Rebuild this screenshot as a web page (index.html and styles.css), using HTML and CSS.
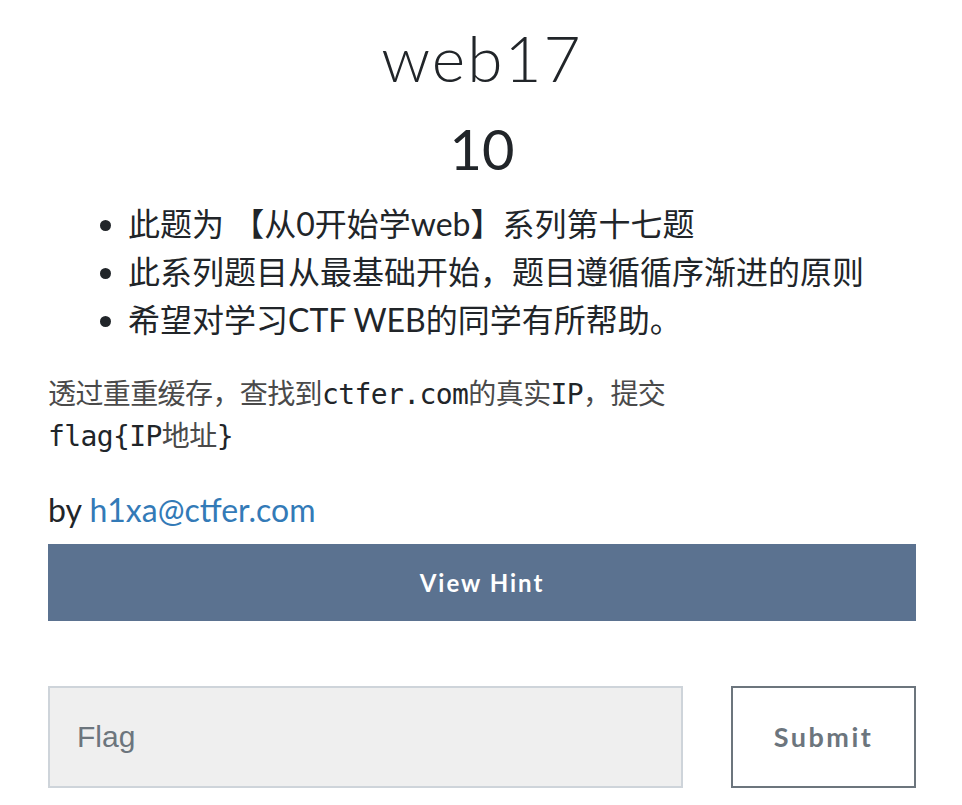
FILE: index.html
```html
<!DOCTYPE html>
<html lang="zh">
<head>
<meta charset="utf-8">
<title>web17</title>
<link rel="stylesheet" href="styles.css">
</head>
<body>
<div class="challenge">
  <h2 class="challenge-name">web17</h2>
  <h3 class="challenge-value">10</h3>
  <ul class="challenge-points">
    <li>此题为 【从0开始学web】系列第十七题</li>
    <li>此系列题目从最基础开始，题目遵循循序渐进的原则</li>
    <li>希望对学习CTF WEB的同学有所帮助。</li>
  </ul>
  <p class="challenge-desc"><span class="cjk">透过重重缓存，查找到</span>ctfer.com<span class="cjk">的真实</span>IP<span class="cjk">，提交</span><br>flag{IP<span class="cjk">地址</span>}</p>
  <p class="challenge-author">by <a href="#" class="author-link">h1xa@ctfer.com</a></p>
  <button class="hint-btn" type="button">View Hint</button>
  <form class="submit-row">
    <input class="flag-input" type="text" placeholder="Flag">
    <button class="submit-btn" type="button">Submit</button>
  </form>
</div>
</body>
</html>
```
FILE: styles.css
```css
html, body {
  margin: 0;
  padding: 0;
  background: #ffffff;
}
body {
  font-family: "Lato", "Noto Sans CJK SC", sans-serif;
  color: #212529;
}
.challenge {
  padding: 0 46px 0 48px;
}
.challenge-name {
  margin: 20px 0 0;
  text-align: center;
  font-family: "Lato", sans-serif;
  font-weight: 300;
  font-size: 64px;
  line-height: 1.2;
  letter-spacing: 2px;
}
.challenge-value {
  margin: 18px 0 0;
  text-align: center;
  font-weight: 400;
  font-size: 56px;
  line-height: 1.2;
}
.challenge-points {
  margin: 18px 0 0;
  padding-left: 80px;
  font-size: 32px;
  line-height: 48px;
}
.challenge-desc {
  margin: 30px 0 0;
  font-family: "DejaVu Sans Mono", "Noto Sans CJK SC", monospace;
  font-size: 28px;
  line-height: 42px;
  letter-spacing: -0.6px;
  color: #212529;
}
.challenge-desc .cjk {
  color: #4a4a4a;
}
.challenge-author {
  margin: 28px 0 0;
  font-size: 32px;
  line-height: 48px;
}
.author-link {
  color: #337ab7;
  text-decoration: none;
}
.hint-btn {
  display: block;
  width: 100%;
  height: 77px;
  margin: 10px 0 0;
  border: none;
  background: #5b7290;
  color: #ffffff;
  font-family: "Lato", sans-serif;
  font-weight: 700;
  font-size: 24px;
  letter-spacing: 2px;
  cursor: pointer;
}
.submit-row {
  display: grid;
  grid-template-columns: 1fr 185px;
  column-gap: 48px;
  margin: 65px 0 0;
}
.flag-input {
  box-sizing: border-box;
  height: 102px;
  margin: 0;
  padding: 0 27px;
  border: 2px solid #ced4da;
  background: #efefef;
  font-family: "Liberation Sans", Arial, sans-serif;
  font-size: 30px;
  color: #495057;
  outline: none;
}
.flag-input::placeholder {
  color: #6c757d;
}
.submit-btn {
  box-sizing: border-box;
  height: 102px;
  margin: 0;
  border: 2px solid #6c757d;
  background: #ffffff;
  color: #6c757d;
  font-family: "Lato", sans-serif;
  font-weight: 700;
  font-size: 27px;
  letter-spacing: 2.5px;
  cursor: pointer;
}
```
